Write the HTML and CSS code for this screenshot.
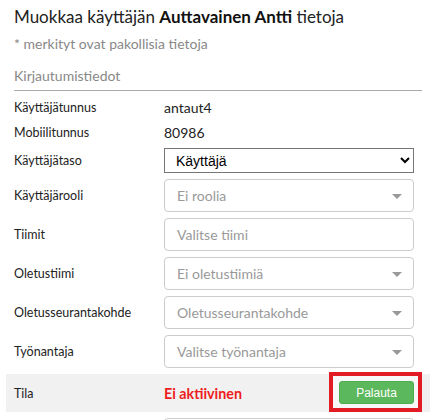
FILE: index.html
```html
<!DOCTYPE html>
<html lang="fi">
<head>
<meta charset="utf-8">
<link rel="stylesheet" href="styles.css">
</head>
<body>
<div class="page">
  <h1 class="title">Muokkaa käyttäjän <b>Auttavainen Antti</b> tietoja</h1>
  <p class="note">* merkityt ovat pakollisia tietoja</p>
  <h2 class="section">Kirjautumistiedot</h2>
  <div class="form">
    <div class="row text-row">
      <span class="label">Käyttäjätunnus</span>
      <span class="value">antaut4</span>
    </div>
    <div class="row text-row">
      <span class="label">Mobiilitunnus</span>
      <span class="value">80986</span>
    </div>
    <div class="row">
      <span class="label">Käyttäjätaso</span>
      <select class="native">
        <option>Käyttäjä</option>
      </select>
    </div>
    <div class="row">
      <span class="label">Käyttäjärooli</span>
      <div class="combo"><span class="ph">Ei roolia</span><span class="caret"></span></div>
    </div>
    <div class="row">
      <span class="label">Tiimit</span>
      <div class="combo"><span class="ph">Valitse tiimi</span></div>
    </div>
    <div class="row">
      <span class="label">Oletustiimi</span>
      <div class="combo"><span class="ph">Ei oletustiimiä</span><span class="caret"></span></div>
    </div>
    <div class="row">
      <span class="label">Oletusseurantakohde</span>
      <div class="combo"><span class="ph">Oletusseurantakohde</span><span class="caret"></span></div>
    </div>
    <div class="row">
      <span class="label">Työnantaja</span>
      <div class="combo"><span class="ph">Valitse työnantaja</span><span class="caret"></span></div>
    </div>
    <div class="row status-row">
      <span class="label">Tila</span>
      <span class="status">Ei aktiivinen</span>
      <div class="highlight"><button class="btn">Palauta</button></div>
    </div>
    <div class="row">
      <span class="label"></span>
      <div class="combo"></div>
    </div>
  </div>
</div>
</body>
</html>
```

FILE: styles.css
```css
html, body {
  margin: 0;
  padding: 0;
  background: #fff;
}
body {
  font-family: Lato, "Open Sans", sans-serif;
  color: #222;
  height: 420px;
  overflow: hidden;
}
.page {
  width: 408px;
  padding: 0 20px 0 14px;
}
.title {
  margin: 5px 0 0;
  font-size: 17px;
  line-height: 24px;
  font-weight: 400;
  color: #222;
}
.title b {
  font-weight: 700;
  color: #111;
}
.note {
  margin: 5px 0 0;
  font-size: 14px;
  line-height: 20px;
  color: #888;
}
.section {
  margin: 12px 0 0;
  padding-bottom: 4px;
  font-size: 14px;
  line-height: 20px;
  font-weight: 400;
  color: #888;
  border-bottom: 1px solid #aaa;
}
.form {
  display: flex;
  flex-direction: column;
  gap: 6px;
  padding-top: 7px;
}
.row {
  display: flex;
  align-items: center;
  position: relative;
}
.text-row {
  height: 19px;
}
.label {
  width: 150px;
  flex: none;
  font-size: 12.5px;
  color: #222;
}
.value {
  font-size: 14px;
  color: #222;
}
.native {
  width: 250px;
  height: 25px;
  margin: 0;
  border: 1px solid #767676;
  border-radius: 0;
  background: #fff;
  font-family: "Liberation Sans", Arial, sans-serif;
  font-size: 14px;
  color: #000;
  padding: 0 4px 0 7px;
}
.combo {
  width: 250px;
  height: 33px;
  box-sizing: border-box;
  border: 1px solid #ccc;
  border-radius: 4px;
  display: flex;
  align-items: center;
  padding: 0 12px;
  position: relative;
}
.ph {
  font-size: 14px;
  color: #999;
}
.caret {
  position: absolute;
  right: 11px;
  top: 14px;
  width: 0;
  height: 0;
  border-left: 5px solid transparent;
  border-right: 5px solid transparent;
  border-top: 5px solid #999;
}
.status-row {
  height: 38px;
  margin: 0 -8px 0 -8px;
  padding-left: 8px;
  background: #f1f1f1;
}
.status {
  font-size: 14.3px;
  font-weight: 700;
  color: #ee1c1c;
}
.highlight {
  position: absolute;
  left: 323px;
  top: -2px;
  padding: 5px 4px 4px 6px;
  border: 4px solid #e21c24;
  background: #f8f8f8;
}
.btn {
  display: block;
  width: 75px;
  height: 23px;
  border: 1px solid #4cae4c;
  border-radius: 3px;
  background: #5cb85c;
  color: #fff;
  font-family: "Liberation Sans", Arial, sans-serif;
  font-size: 12px;
  padding: 0;
}
```
